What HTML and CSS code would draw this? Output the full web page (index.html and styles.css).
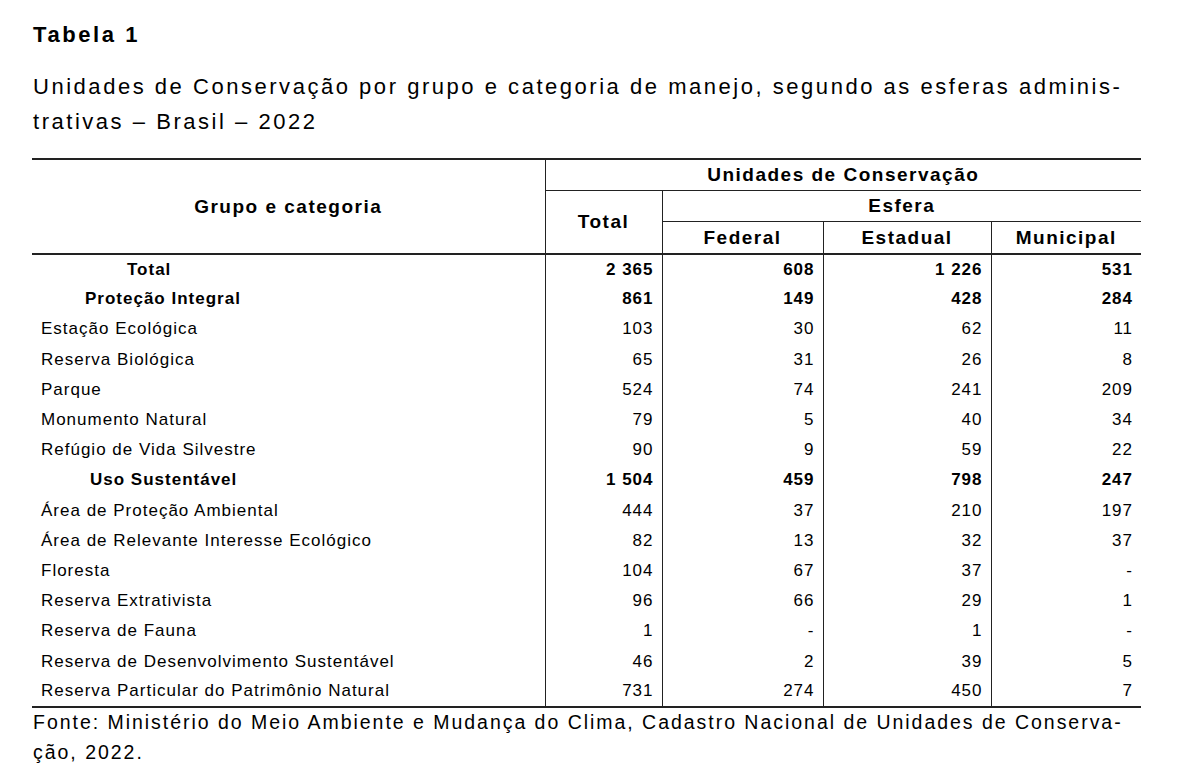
FILE: index.html
```html
<!DOCTYPE html>
<html lang="pt-BR">
<head>
<meta charset="utf-8">
<title>Tabela 1</title>
<link rel="stylesheet" href="styles.css">
</head>
<body>
<div class="page">
  <h1 class="tab-num">Tabela 1</h1>
  <p class="caption">Unidades de Conservação por grupo e categoria de manejo, segundo as esferas adminis-<br>trativas – Brasil – 2022</p>
  <table class="data">
    <colgroup>
      <col class="c1"><col class="c2"><col class="c3"><col class="c4"><col class="c5">
    </colgroup>
    <thead>
      <tr class="h1">
        <th rowspan="3" class="grp">Grupo e categoria</th>
        <th colspan="4" class="span">Unidades de Conservação</th>
      </tr>
      <tr class="h2">
        <th rowspan="2" class="tot">Total</th>
        <th colspan="3" class="span">Esfera</th>
      </tr>
      <tr class="h3">
        <th>Federal</th><th>Estadual</th><th>Municipal</th>
      </tr>
    </thead>
    <tbody>
      <tr class="b first"><td class="lbl l-total">Total</td><td>2 365</td><td>608</td><td>1 226</td><td>531</td></tr>
      <tr class="b"><td class="lbl l-pi">Proteção Integral</td><td>861</td><td>149</td><td>428</td><td>284</td></tr>
      <tr><td class="lbl">Estação Ecológica</td><td>103</td><td>30</td><td>62</td><td>11</td></tr>
      <tr><td class="lbl">Reserva Biológica</td><td>65</td><td>31</td><td>26</td><td>8</td></tr>
      <tr><td class="lbl">Parque</td><td>524</td><td>74</td><td>241</td><td>209</td></tr>
      <tr><td class="lbl">Monumento Natural</td><td>79</td><td>5</td><td>40</td><td>34</td></tr>
      <tr><td class="lbl">Refúgio de Vida Silvestre</td><td>90</td><td>9</td><td>59</td><td>22</td></tr>
      <tr class="b"><td class="lbl l-us">Uso Sustentável</td><td>1 504</td><td>459</td><td>798</td><td>247</td></tr>
      <tr><td class="lbl">Área de Proteção Ambiental</td><td>444</td><td>37</td><td>210</td><td>197</td></tr>
      <tr><td class="lbl">Área de Relevante Interesse Ecológico</td><td>82</td><td>13</td><td>32</td><td>37</td></tr>
      <tr><td class="lbl">Floresta</td><td>104</td><td>67</td><td>37</td><td>-</td></tr>
      <tr><td class="lbl">Reserva Extrativista</td><td>96</td><td>66</td><td>29</td><td>1</td></tr>
      <tr><td class="lbl">Reserva de Fauna</td><td>1</td><td>-</td><td>1</td><td>-</td></tr>
      <tr><td class="lbl">Reserva de Desenvolvimento Sustentável</td><td>46</td><td>2</td><td>39</td><td>5</td></tr>
      <tr><td class="lbl">Reserva Particular do Patrimônio Natural</td><td>731</td><td>274</td><td>450</td><td>7</td></tr>
    </tbody>
  </table>
  <p class="source">Fonte: Ministério do Meio Ambiente e Mudança do Clima, Cadastro Nacional de Unidades de Conserva-<br>ção, 2022.</p>
</div>
</body>
</html>
```

FILE: styles.css
```css
html, body {
  margin: 0;
  padding: 0;
  background: #fff;
}
body {
  font-family: "Liberation Sans", Arial, sans-serif;
  color: #000;
}
.page {
  padding: 22px 0 0 32px;
  width: 1109px;
}
.tab-num {
  margin: 0 0 0 1px;
  font-size: 22px;
  font-weight: bold;
  letter-spacing: 2.6px;
  line-height: 26px;
}
.caption {
  margin: 21px 0 0 1px;
  font-size: 22px;
  letter-spacing: 2.53px;
  line-height: 35px;
  white-space: nowrap;
}
.data {
  margin-top: 19px;
  width: 1109px;
  border-collapse: collapse;
  table-layout: fixed;
  font-size: 17px;
  letter-spacing: 1px;
}
.c1 { width: 513px; }
.c2 { width: 117px; }
.c3 { width: 161px; }
.c4 { width: 168px; }
.c5 { width: 150px; }
.data thead tr.h1 th { border-top: 2px solid #222; }
.data th {
  font-size: 19px;
  letter-spacing: 1.5px;
  font-weight: bold;
  padding: 0;
  border: 1px solid #222;
  text-align: center;
  vertical-align: middle;
}
.data th:first-child { border-left: none; }
.data th:last-child { border-right: none; }
.data .h1 th { height: 30px; }
.data .h2 th { height: 30px; }
.data .h3 th { height: 30px; padding-top: 1px; }
.data .h2 th.tot { border-right: 1px solid #222; }
.data .h3 th:last-child { border-right: none; }
.data th.grp { border-bottom: 2px solid #222; }
.data .h3 th { border-bottom: 2px solid #222; }
.data .h2 th.tot { border-bottom: 2px solid #222; }
.data td {
  height: 30.2px;
  padding: 0 8px 0 9px;
  box-sizing: border-box;
  text-align: right;
  border-left: 1px solid #222;
  border-right: 1px solid #222;
  vertical-align: middle;
  white-space: nowrap;
}
.data td:first-child { border-left: none; text-align: left; }
.data td:last-child { border-right: none; }
.data tbody tr:last-child td { border-bottom: 2px solid #222; }
.data tr.b td { font-weight: bold; }
.data td.l-total { padding-left: 95px; }
.data td.l-pi { padding-left: 53px; }
.data td.l-us { padding-left: 58px; }
.source {
  margin: -1px 0 0 1px;
  font-size: 19.5px;
  letter-spacing: 1.97px;
  line-height: 30px;
  white-space: nowrap;
}
```
